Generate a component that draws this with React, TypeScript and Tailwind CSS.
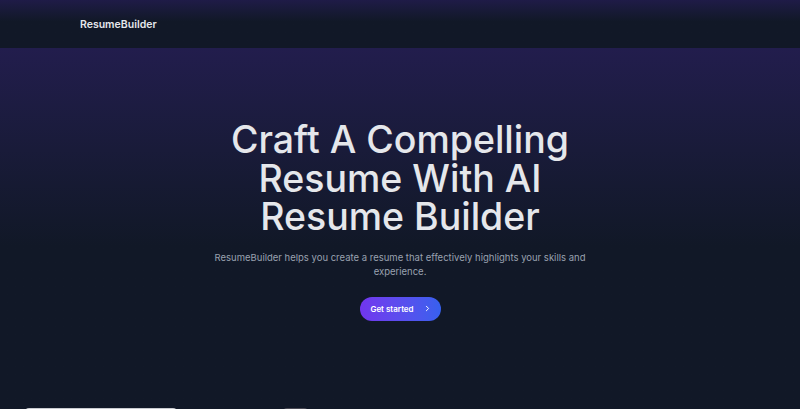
import React from 'react'
import { ChevronRight } from 'lucide-react'

export default function App() {
  return (
    <div className="min-h-screen bg-[#111827] font-['Inter',sans-serif] overflow-hidden">
      {/* Header */}
      <header className="h-12 bg-gradient-to-b from-[#1f1b47] to-[#111827] to-[45%] flex items-center px-20 pt-px">
        <span className="text-[10.5px] font-semibold text-gray-200">ResumeBuilder</span>
      </header>

      {/* Hero */}
      <section className="bg-gradient-to-b from-[#221d4d] to-[#111827] to-[55%] pt-[73px] pb-[87px] flex flex-col items-center text-center">
        <h1 className="text-[37.5px] leading-[38.5px] font-medium text-gray-200 max-w-[400px]">
          Craft A Compelling Resume With AI Resume Builder
        </h1>
        <p className="mt-[14px] text-[9.5px] leading-[14px] text-gray-400 max-w-[390px]">
          ResumeBuilder helps you create a resume that effectively highlights your skills and experience.
        </p>
        <button className="mt-[18px] h-6 w-[81px] rounded-full bg-gradient-to-r from-[#7135ee] to-[#3660ee] text-white text-[8px] font-semibold flex items-center justify-center gap-[9px] pl-[2px]">
          Get started
          <ChevronRight className="w-[9px] h-[9px]" strokeWidth={2.5} />
        </button>
      </section>

      {/* Preview strip */}
      <div className="flex pl-[25px]">
        <div className="w-[152px] h-8 bg-[#c9cbd0] rounded-t-sm" />
        <div className="w-[106px]" />
        <div className="w-[25px] h-8 bg-[#4a4a55] rounded-t-sm" />
      </div>
    </div>
  )
}
